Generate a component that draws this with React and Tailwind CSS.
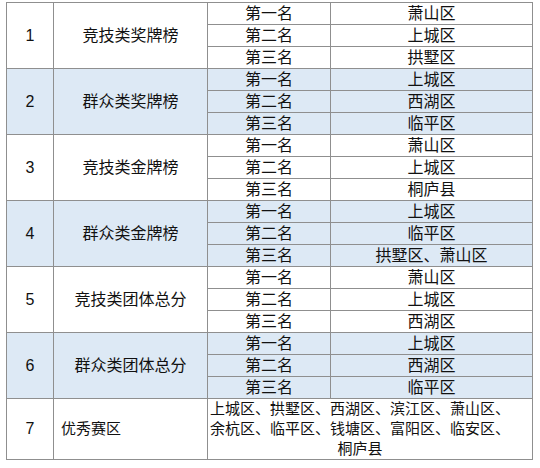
import React from 'react';

const groups = [
  { no: '1', name: '竞技类奖牌榜', blue: false, places: ['萧山区', '上城区', '拱墅区'] },
  { no: '2', name: '群众类奖牌榜', blue: true, places: ['上城区', '西湖区', '临平区'] },
  { no: '3', name: '竞技类金牌榜', blue: false, places: ['萧山区', '上城区', '桐庐县'] },
  { no: '4', name: '群众类金牌榜', blue: true, places: ['上城区', '临平区', '拱墅区、萧山区'] },
  { no: '5', name: '竞技类团体总分', blue: false, places: ['萧山区', '上城区', '西湖区'] },
  { no: '6', name: '群众类团体总分', blue: true, places: ['上城区', '西湖区', '临平区'] },
];

const ranks = ['第一名', '第二名', '第三名'];

const cell = 'border border-[#8f8f8f] p-0 text-center leading-[20px]';

const App = () => {
  return (
    <div className="bg-white w-[540px] h-[468px] pt-[2px] pl-[6px] text-[16px] text-[#111] font-['Liberation_Sans','Noto_Sans_CJK_SC',sans-serif]">
      <table className="w-[527px] border-collapse table-fixed">
        <colgroup>
          <col className="w-[47px]" />
          <col className="w-[154px]" />
          <col className="w-[123px]" />
          <col />
        </colgroup>
        <tbody>
          {groups.map((g) =>
            ranks.map((r, i) => (
              <tr key={g.no + r} className={`h-[22px] ${g.blue ? 'bg-[#dde9f5]' : 'bg-white'}`}>
                {i === 0 && (
                  <>
                    <td rowSpan={3} className={cell}>{g.no}</td>
                    <td rowSpan={3} className={cell}>{g.name}</td>
                  </>
                )}
                <td className={cell}>{r}</td>
                <td className={cell}>{g.places[i]}</td>
              </tr>
            ))
          )}
          <tr className="h-[61px] bg-white">
            <td className={cell}>7</td>
            <td className={`${cell} text-left pl-[7px] text-[15px]`}>优秀赛区</td>
            <td colSpan={2} className={`${cell} whitespace-nowrap text-[15px] pr-[20px]`}>
              上城区、拱墅区、西湖区、滨江区、萧山区、
              <br />
              余杭区、临平区、钱塘区、富阳区、临安区、
              <br />
              桐庐县
            </td>
          </tr>
        </tbody>
      </table>
    </div>
  );
};

export default App;
